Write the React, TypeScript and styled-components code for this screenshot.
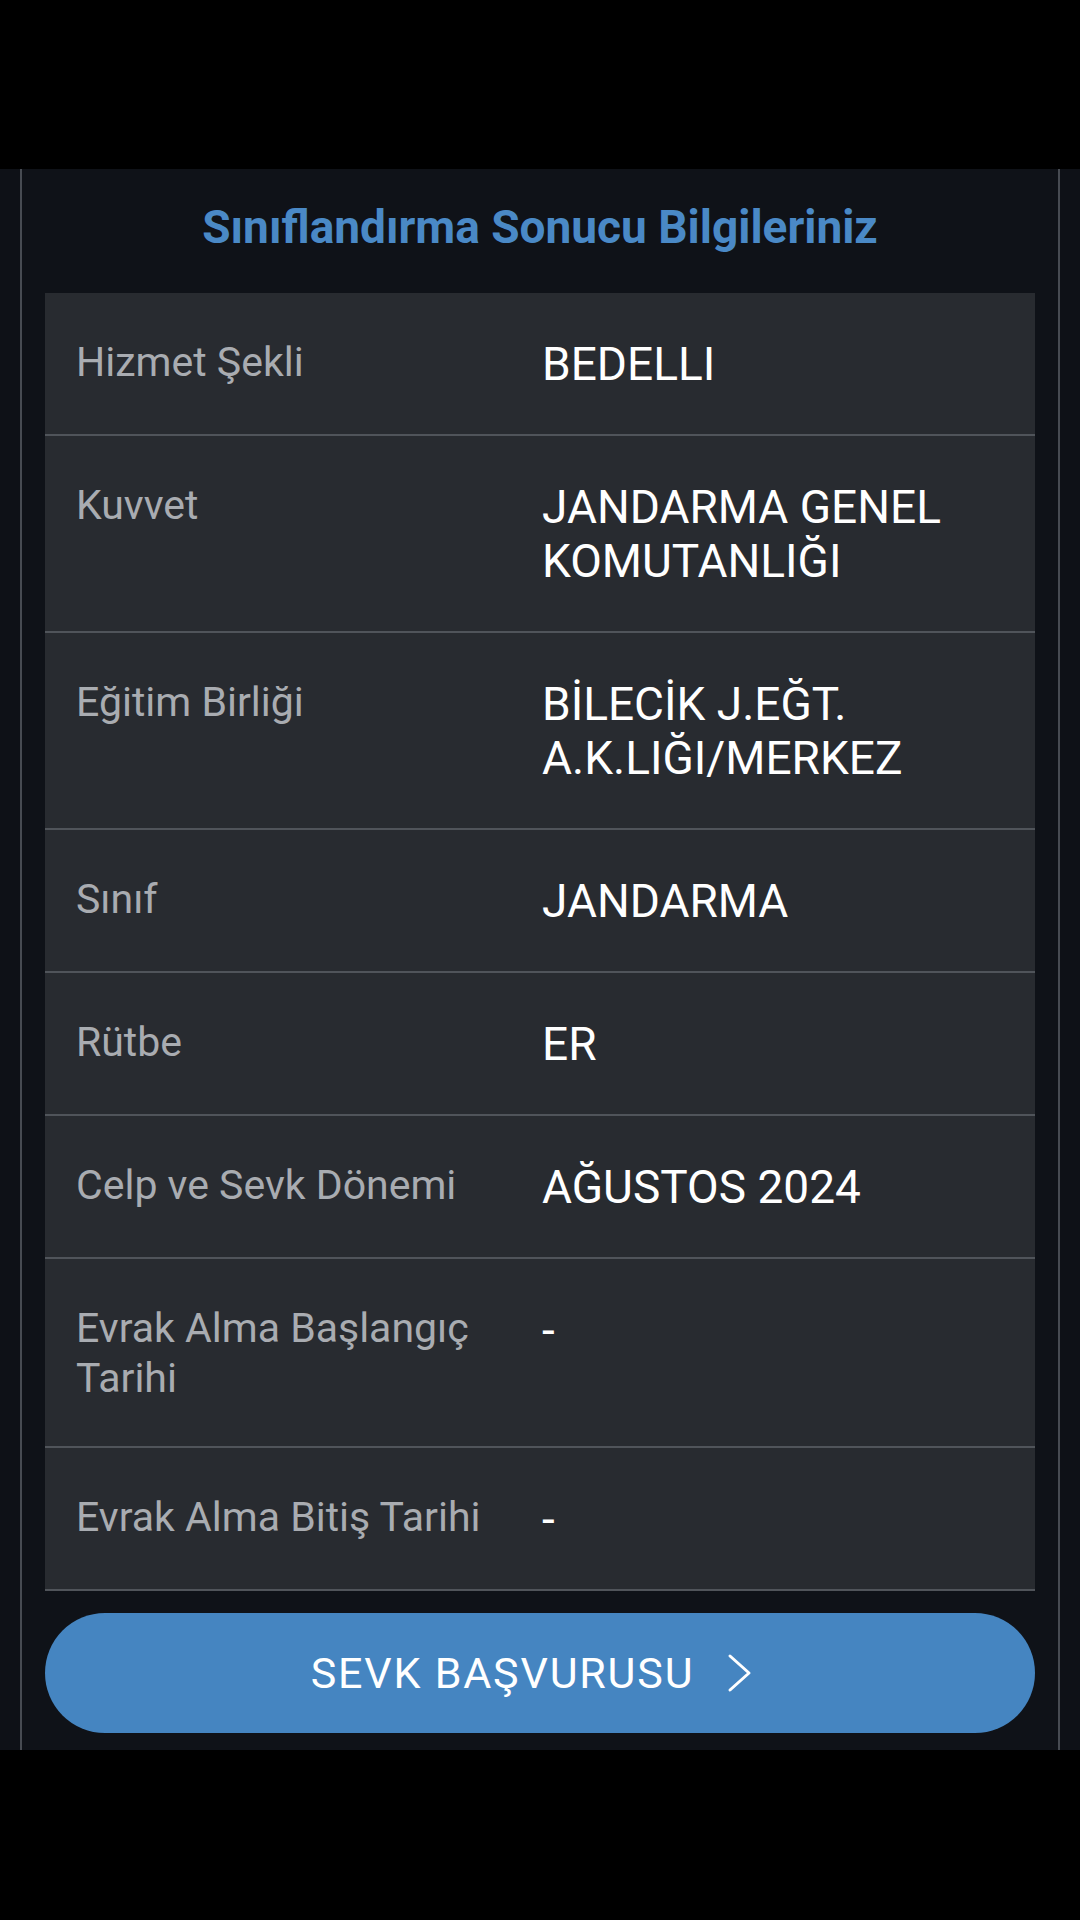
import React from 'react';
import styled, { createGlobalStyle } from 'styled-components';

const GlobalStyle = createGlobalStyle`
  html, body {
    margin: 0;
    padding: 0;
    background: #000000;
  }
  body {
    font-family: Roboto, 'Liberation Sans', sans-serif;
    -webkit-font-smoothing: antialiased;
  }
  * {
    box-sizing: border-box;
  }
`;

const Screen = styled.div`
  width: 1080px;
  min-height: 1920px;
  display: flex;
  flex-direction: column;
  background: #000000;
`;

const TopBar = styled.div`
  height: 169px;
  background: #000000;
`;

const Panel = styled.div`
  background: #0e1117;
`;

const Frame = styled.section`
  margin: 0 20px;
  padding: 31px 23px 17px;
  border-left: 2px solid #474b52;
  border-right: 2px solid #474b52;
  background: #0f1218;
`;

const Title = styled.h2`
  margin: 0 0 39px;
  font-size: 46px;
  line-height: 54px;
  font-weight: 700;
  color: #4a89c6;
  text-align: center;
`;

const Card = styled.div`
  background: #282b30;
`;

const Row = styled.div`
  display: grid;
  grid-template-columns: 466px 1fr;
  align-items: start;
  padding: 44px 24px 43px 31px;
  border-bottom: 2px solid #50545a;
`;

const Label = styled.div`
  font-size: 41px;
  line-height: 50px;
  color: #a9acb1;
`;

const Value = styled.div`
  font-size: 46px;
  line-height: 54px;
  color: #ffffff;
`;

const ActionButton = styled.button`
  margin-top: 22px;
  width: 100%;
  height: 120px;
  border: none;
  border-radius: 60px;
  background: #4585c1;
  color: #ffffff;
  display: flex;
  align-items: center;
  justify-content: center;
  gap: 30px;
  font-family: Roboto, 'Liberation Sans', sans-serif;
  font-size: 43px;
  letter-spacing: 1.8px;
  cursor: pointer;
`;

const Chevron = styled.svg`
  width: 45px;
  height: 40px;
  flex-shrink: 0;
`;

const BottomSpace = styled.div`
  flex: 1;
  background: #000000;
`;

interface InfoItem {
  label: string;
  value: string;
}

const items: InfoItem[] = [
  { label: 'Hizmet Şekli', value: 'BEDELLI' },
  { label: 'Kuvvet', value: 'JANDARMA GENEL KOMUTANLIĞI' },
  { label: 'Eğitim Birliği', value: 'BİLECİK J.EĞT. A.K.LIĞI/MERKEZ' },
  { label: 'Sınıf', value: 'JANDARMA' },
  { label: 'Rütbe', value: 'ER' },
  { label: 'Celp ve Sevk Dönemi', value: 'AĞUSTOS 2024' },
  { label: 'Evrak Alma Başlangıç Tarihi', value: '-' },
  { label: 'Evrak Alma Bitiş Tarihi', value: '-' },
];

const App: React.FC = () => {
  return (
    <Screen>
      <GlobalStyle />
      <TopBar />
      <Panel>
        <Frame>
          <Title>Sınıflandırma Sonucu Bilgileriniz</Title>
          <Card>
            {items.map((item) => (
              <Row key={item.label}>
                <Label>{item.label}</Label>
                <Value>{item.value}</Value>
              </Row>
            ))}
          </Card>
          <ActionButton type="button">
            <span>SEVK BAŞVURUSU</span>
            <Chevron viewBox="0 0 45 40" fill="none">
              <path d="M6 3 L25 20 L6 37" stroke="#ffffff" strokeWidth="3" strokeLinecap="round" strokeLinejoin="round" />
            </Chevron>
          </ActionButton>
        </Frame>
      </Panel>
      <BottomSpace />
    </Screen>
  );
};

export default App;
